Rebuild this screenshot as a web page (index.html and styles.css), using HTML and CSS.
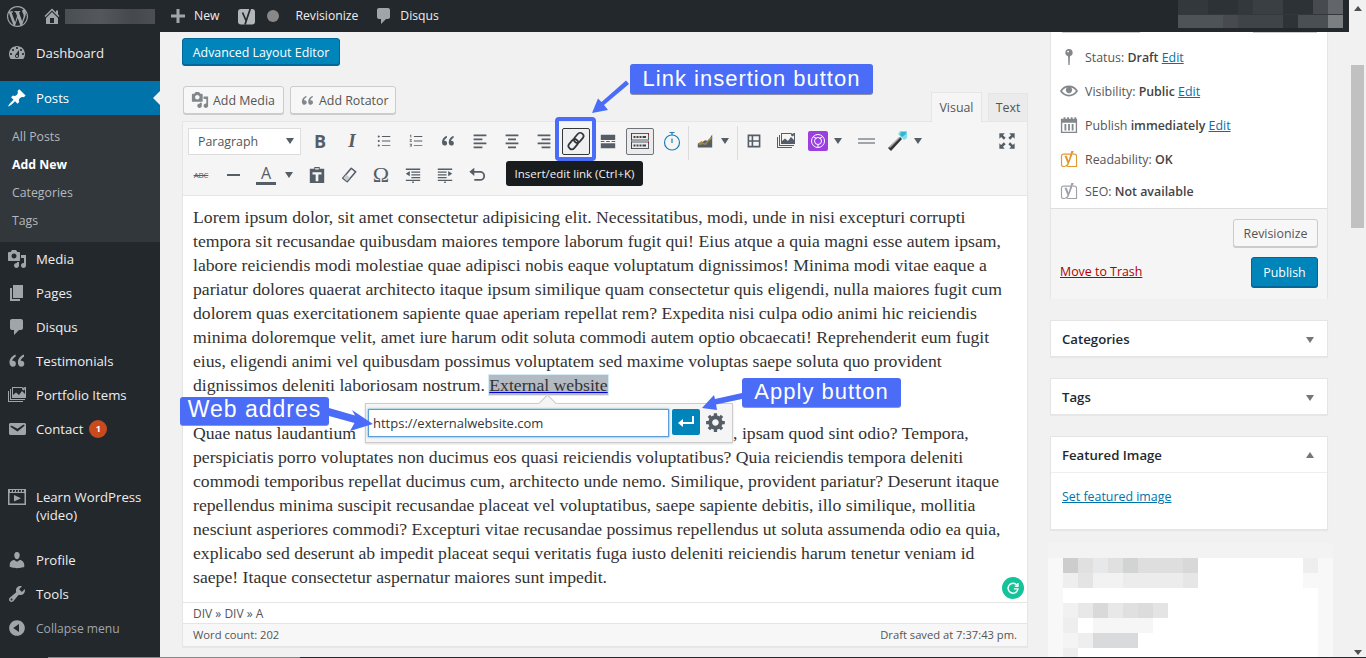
FILE: index.html
```html
<!DOCTYPE html>
<html lang="en">
<head>
<meta charset="utf-8">
<title>Add New Post</title>
<link rel="stylesheet" href="styles.css">
</head>
<body>
<svg class="sprite" xmlns="http://www.w3.org/2000/svg">
  <symbol id="i-wp" viewBox="0 0 20 20"><path d="M20 10c0-5.51-4.49-10-10-10C4.48 0 0 4.49 0 10c0 5.52 4.48 10 10 10 5.51 0 10-4.48 10-10zM7.78 15.37L4.37 6.22c.55-.02 1.17-.08 1.17-.08.5-.06.44-1.13-.06-1.11 0 0-1.45.11-2.37.11-.18 0-.37 0-.58-.01C4.12 2.69 6.87 1.11 10 1.11c2.33 0 4.45.87 6.05 2.34-.68-.11-1.65.39-1.65 1.58 0 .74.45 1.36.9 2.1.35.61.55 1.36.55 2.46 0 1.49-1.4 5-1.4 5l-3.03-8.37c.54-.02.82-.17.82-.17.5-.05.44-1.25-.06-1.22 0 0-1.44.12-2.38.12-.87 0-2.33-.12-2.33-.12-.5-.03-.56 1.2-.06 1.22l.92.08 1.26 3.41zM17.41 10c.24-.64.74-1.87.43-4.25.7 1.29 1.05 2.71 1.05 4.25 0 3.29-1.73 6.24-4.4 7.78.97-2.59 1.94-5.2 2.92-7.78zM6.1 18.09C3.12 16.65 1.11 13.53 1.11 10c0-1.3.23-2.48.72-3.59C3.25 10.3 4.67 14.2 6.1 18.09zm4.03-6.63l2.58 6.98c-.86.29-1.76.45-2.71.45-.79 0-1.57-.11-2.29-.33.81-2.38 1.62-4.74 2.42-7.1z"/></symbol>
  <symbol id="i-home" viewBox="0 0 20 20"><path d="M16 8.5l1.53 1.53-1.06 1.06L10 4.62l-6.47 6.47-1.06-1.06L10 2.5l4 4v-2h2v4zm-6-2.46l6 5.99V18H4v-5.97zM12 17v-5H8v5h4z"/></symbol>
  <symbol id="i-plus" viewBox="0 0 20 20"><path d="M17 8.500v3h-5.500V17h-3v-5.500H3v-3h5.500V3h3v5.500z"/></symbol>
  <symbol id="i-comment" viewBox="0 0 20 20"><path d="M5 2h9c1.100 0 2 .9 2 2v7c0 1.100-.9 2-2 2h-2l-5 5v-5H5c-1.100 0-2-.9-2-2V4c0-1.100.9-2 2-2z"/></symbol>
  <symbol id="i-dash" viewBox="0 0 20 20"><path d="M3.760 16h12.480c1.100-1.370 1.760-3.110 1.760-5 0-4.420-3.580-8-8-8s-8 3.580-8 8c0 1.890.66 3.630 1.760 5zM10 4c.55 0 1 .45 1 1s-.45 1-1 1-1-.45-1-1 .45-1 1-1zM6 6c.55 0 1 .45 1 1s-.45 1-1 1-1-.45-1-1 .45-1 1-1zm8 0c.55 0 1 .45 1 1s-.45 1-1 1-1-.45-1-1 .45-1 1-1zm-5.370 5.550L12 7v6c0 1.100-.9 2-2 2s-2-.9-2-2c0-.57.24-1.080.63-1.450zM4 10c.55 0 1 .45 1 1s-.45 1-1 1-1-.45-1-1 .45-1 1-1zm12 0c.55 0 1 .45 1 1s-.45 1-1 1-1-.45-1-1 .45-1 1-1zm-5 3c0-.55-.45-1-1-1s-1 .45-1 1 .45 1 1 1 1-.45 1-1z"/></symbol>
  <symbol id="i-pin" viewBox="0 0 20 20"><path d="M10.440 3.020l1.820-1.820 6.360 6.350-1.830 1.820c-1.050-.68-2.480-.57-3.410.36l-.75.75c-.92.93-1.040 2.350-.35 3.410l-1.830 1.820-2.410-2.410-2.800 2.790c-.42.42-3.380 2.710-3.800 2.290s1.860-3.390 2.280-3.810l2.790-2.790L4.100 9.360l1.830-1.820c1.050.69 2.480.57 3.400-.36l.75-.75c.93-.92 1.050-2.350.36-3.410z"/></symbol>
  <symbol id="i-media" viewBox="0 0 20 20"><path d="M13 11V4c0-.55-.45-1-1-1h-1.670L9 1H5L3.670 3H2c-.55 0-1 .45-1 1v7c0 .55.45 1 1 1h10c.55 0 1-.45 1-1zM7 4.500c1.380 0 2.500 1.120 2.500 2.500S8.380 9.500 7 9.500 4.500 8.380 4.500 7 5.620 4.500 7 4.500zM14 6h5v10.500c0 1.380-1.120 2.500-2.500 2.500S14 17.880 14 16.500s1.120-2.500 2.500-2.500c.17 0 .34.02.5.05V9h-3V6zm-4 8.050V13h2v3.500c0 1.380-1.120 2.500-2.500 2.500S7 17.880 7 16.500 8.120 14 9.500 14c.17 0 .34.02.5.05z"/></symbol>
  <symbol id="i-page" viewBox="0 0 20 20"><path d="M6 15V2h10v13H6zm-1 1h8v2H3V5h2v11z"/></symbol>
  <symbol id="i-quote" viewBox="0 0 20 20"><path d="M8.600 3.500C5 5 2.500 7.600 2.500 11.500c0 2.500 1.400 4.200 3.400 4.200 1.700 0 3-1.300 3-3s-1.200-2.900-2.800-2.900c-.4 0-.7 0-.9.1.3-1.700 1.800-3.200 3.400-4.100zM17 3.500c-3.600 1.500-6.100 4.100-6.100 8 0 2.500 1.400 4.200 3.400 4.200 1.700 0 3-1.300 3-3s-1.200-2.900-2.800-2.900c-.4 0-.7 0-.9.1.3-1.700 1.800-3.200 3.400-4.100z"/></symbol>
  <symbol id="i-gallery" viewBox="0 0 20 20"><path d="M5 2h14v11H5zm1 1v7l3-2.500 3 2.500 3-4 3 3V3zm9 .800a1.500 1.500 0 1 1 0 .01z" fill-rule="evenodd"/><path d="M3 4h1v10h14v1H3zM1 6h1v10h14v1H1z"/></symbol>
  <symbol id="i-mail" viewBox="0 0 20 20"><path d="M3.870 4h13.250C18.370 4 19 4.590 19 5.790v8.420c0 1.190-.63 1.790-1.880 1.790H3.870c-1.250 0-1.880-.6-1.880-1.790V5.790c0-1.200.63-1.790 1.880-1.790zm6.620 8.600l6.740-5.530c.24-.2.43-.66.13-1.070-.29-.41-.82-.42-1.170-.17l-5.700 3.860L4.800 6.830c-.35-.25-.88-.24-1.170.17-.3.41-.11.87.13 1.070z"/></symbol>
  <symbol id="i-video" viewBox="0 0 20 20"><path d="M1 1h18v16H1zm1.500 4v10.500h15V5zM3 2v2h1.500l.6-2zm3 0v2h1.500l.6-2zm3 0v2h1.500l.6-2zm3 0v2h1.500l.6-2zm3 0v2h1.500l.6-2zM7 7l7 3.200L7 13.500z" fill-rule="evenodd"/></symbol>
  <symbol id="i-user" viewBox="0 0 20 20"><path d="M10 9.250c-2.270 0-2.730-3.440-2.730-3.440C7 4.020 7.820 2 9.970 2c2.160 0 2.980 2.020 2.710 3.810 0 0-.41 3.440-2.680 3.440zm0 2.570L12.720 10c2.390 0 4.520 2.330 4.520 4.530v2.490s-3.650 1.130-7.240 1.130c-3.650 0-7.240-1.130-7.240-1.130v-2.490c0-2.250 1.940-4.480 4.470-4.480z"/></symbol>
  <symbol id="i-tools" viewBox="0 0 20 20"><path d="M16.680 9.770c-1.340 1.340-3.300 1.670-4.950.99l-5.410 6.520c-.99.99-2.590.99-3.580 0s-.99-2.590 0-3.570l6.520-5.420c-.68-1.650-.35-3.610.99-4.950 1.280-1.280 3.120-1.620 4.720-1.060l-2.890 2.890 2.820 2.820 2.860-2.870c.53 1.580.18 3.390-1.080 4.650zM3.810 16.210c.4.39 1.040.39 1.430 0 .4-.4.4-1.040 0-1.430-.39-.4-1.030-.4-1.430 0-.39.39-.39 1.030 0 1.430z"/></symbol>
  <symbol id="i-collapse" viewBox="0 0 20 20"><path d="M10 2.160c4.330 0 7.840 3.510 7.840 7.840s-3.510 7.840-7.840 7.840S2.160 14.330 2.160 10 5.710 2.160 10 2.160zm2 11.720V6.120L6.180 9.970z"/></symbol>
  <symbol id="i-cog" viewBox="0 0 20 20"><path d="M18 12h-2.180c-.17.7-.44 1.350-.81 1.930l1.540 1.540-2.100 2.100-1.540-1.540c-.58.36-1.230.63-1.910.79V19H8v-2.180c-.68-.16-1.330-.43-1.910-.79l-1.540 1.540-2.120-2.120 1.540-1.540c-.36-.58-.63-1.230-.79-1.910H1V9.030h2.170c.16-.7.44-1.350.8-1.940L2.430 5.550l2.100-2.100 1.540 1.540c.58-.37 1.240-.64 1.930-.81V2h3v2.180c.68.16 1.330.43 1.910.79l1.540-1.540 2.120 2.120-1.540 1.540c.36.59.64 1.240.8 1.940H18V12zm-8.500 1.500c1.660 0 3-1.340 3-3s-1.340-3-3-3-3 1.340-3 3 1.340 3 3 3z"/></symbol>
  <symbol id="i-eye" viewBox="0 0 20 20"><path d="M19.700 9.400C17.700 6 14 3.900 10 3.900S2.300 6 .3 9.400L0 10l.3.6c2 3.400 5.700 5.500 9.700 5.500s7.700-2.100 9.700-5.500l.3-.6-.3-.6zM10 14.100c-3.100 0-6-1.600-7.700-4.100C3.600 8 5.700 6.600 8 6.100c-.9.6-1.500 1.700-1.500 2.900 0 1.900 1.600 3.500 3.500 3.500s3.500-1.600 3.500-3.500c0-1.200-.6-2.300-1.500-2.900 2.300.5 4.400 1.900 5.700 3.900-1.700 2.500-4.600 4.100-7.700 4.100z"/></symbol>
  <symbol id="i-key" viewBox="0 0 20 20"><path d="M10 1a4 4 0 0 1 1.300 7.800L11 10l-.3 9h-1.400L9 10l-.3-1.200A4 4 0 0 1 10 1zM9 3a1 1 0 1 0 0 2 1 1 0 0 0 0-2z" fill-rule="evenodd"/></symbol>
  <symbol id="i-cal" viewBox="0 0 20 20"><path d="M2 3h2V1.500h2V3h2V1.500h2V3h2V1.500h2V3h2V1.500h2V3h1v16H1V3zm.5 4.500V17.500h15V7.500zM5 9h2v7H5zm4 0h2v7H9zm4 0h2v7h-2z" fill-rule="evenodd"/></symbol>
  <symbol id="i-y" viewBox="0 0 20 20"><path d="M4 4h8v1.300H4C3 5.300 2.300 6 2.300 7v9c0 1 .7 1.700 1.700 1.700h2V19H4c-1.800 0-3-1.200-3-3V7c0-1.800 1.200-3 3-3zm10.500 0H16c1.800 0 3 1.200 3 3v12H8v-1.300h9.700V7c0-1-.7-1.700-1.700-1.700h-2z" fill-rule="evenodd"/><path d="M12.500 1h2.800L10 15c-.8 2.200-2 3.300-4 3.700v-1.800c1.200-.3 1.900-1 2.300-2.200L5 6.500h2.500l2 5.200z"/></symbol>
  <symbol id="i-bullets" viewBox="0 0 20 20"><path d="M1 3.500a1.500 1.500 0 1 0 3 0 1.500 1.500 0 1 0-3 0zM1 10a1.500 1.500 0 1 0 3 0 1.500 1.500 0 1 0-3 0zm0 6.500a1.500 1.500 0 1 0 3 0 1.500 1.500 0 1 0-3 0zM7 3h12v1.200H7zm0 6.400h12v1.200H7zm0 6.500h12v1.200H7z"/></symbol>
  <symbol id="i-numbers" viewBox="0 0 20 20"><path d="M2 1h1.200v4H2V2H1zM1 7.500h3v1l-1.700 1.500H4v1H1v-1l1.800-1.500H1zM1 14h3v4H1v-1h2v-.5H1.500v-1H3V15H1zM7 3h12v1.200H7zm0 6.400h12v1.200H7zm0 6.500h12v1.200H7z"/></symbol>
  <symbol id="i-alignl" viewBox="0 0 20 20"><path d="M2 2h16v2H2zm0 5h11v2H2zm0 5h16v2H2zm0 5h11v2H2z"/></symbol>
  <symbol id="i-alignc" viewBox="0 0 20 20"><path d="M2 2h16v2H2zm3 5h10v2H5zm-3 5h16v2H2zm3 5h10v2H5z"/></symbol>
  <symbol id="i-alignr" viewBox="0 0 20 20"><path d="M2 2h16v2H2zm5 5h11v2H7zm-5 5h16v2H2zm5 5h11v2H7z"/></symbol>
  <symbol id="i-more" viewBox="0 0 20 20"><path d="M2 3h16v6H2zM2 12.500h16v5.500H2zM2 10h4v1H2zm6 0h4v1H8zm6 0h4v1h-4z"/></symbol>
  <symbol id="i-fs" viewBox="0 0 20 20"><path d="M1.500 1.500h6L5.500 3.500l3 3-2 2-3-3-2 2zm17 0v6l-2-2-3 3-2-2 3-3-2-2zm-17 17v-6l2 2 3-3 2 2-3 3 2 2zm17 0h-6l2-2-3-3 2-2 3 3 2-2z"/></symbol>
  <symbol id="i-paste" viewBox="0 0 20 20"><path d="M7 1h6v2h5v16H2V3h5zm1 1.500V4h4V2.500zM5 7v2.500h3.500V17h3V9.500H15V7z" fill-rule="evenodd"/></symbol>
  <symbol id="i-outdent" viewBox="0 0 20 20"><path d="M1 2h18v1.600H1zm7 3.500h11v1.600H8zm0 3.500h11v1.600H8zm0 3.500h11v1.600H8zM1 16h18v1.600H1zM9 18h2v2H9zM6 5v6.500L1 8.300z"/></symbol>
  <symbol id="i-indent" viewBox="0 0 20 20"><path d="M1 2h18v1.600H1zm0 3.500h11v1.600H1zm0 3.500h11v1.600H1zm0 3.500h11v1.600H1zM1 16h18v1.600H1zM9 18h2v2H9zM14 5v6.500l5-3.200z"/></symbol>
  <symbol id="i-undo" viewBox="0 0 20 20"><path d="M7 2v3.500h6.500a5.500 5.500 0 0 1 0 11H7v-2h6.500a3.500 3.500 0 0 0 0-7H7V11L1.500 6.500z"/></symbol>
  <symbol id="i-film" viewBox="0 0 20 20"><path d="M2 2h16v16H2zm2 2v5h3V4zm5 0v5h7V4zM4 11v5h3v-5zm5 0v5h7v-5z" fill-rule="evenodd"/></symbol>
</svg>

<div class="stage">
  <div class="leftpane">
    <header class="adminbar">
      <svg class="bar-wp"><use href="#i-wp"/></svg>
      <svg class="bar-home"><use href="#i-home"/></svg>
      <div class="bar-blur"></div>
      <svg class="bar-plus"><use href="#i-plus"/></svg>
      <span class="bar-new">New</span>
      <svg class="bar-yoast" viewBox="0 0 18 20"><rect x="0" y="3" width="17" height="15.500" rx="3" fill="#b4b7ba"/><path d="M4.500 6.500l3.500 8M13 .5L7 18.500" fill="none" stroke="#23282d" stroke-width="1.700"/></svg>
      <span class="bar-dot"></span>
      <span class="bar-rev">Revisionize</span>
      <svg class="bar-bubble"><use href="#i-comment"/></svg>
      <span class="bar-disqus">Disqus</span>
      <svg class="bar-mosaic" viewBox="0 0 165 28">
        <rect width="165" height="28" fill="#33383d"/>
        <rect x="30" width="30" height="14" fill="#2d3237"/><rect x="75" width="30" height="14" fill="#3a3f44"/><rect x="105" width="30" height="14" fill="#2d3237"/><rect x="135" width="15" height="14" fill="#474b4f"/><rect x="150" width="15" height="14" fill="#62656a"/>
        <rect y="15" width="45" height="13" fill="#4e5358"/><rect x="45" y="15" width="15" height="13" fill="#474b50"/><rect x="60" y="15" width="45" height="13" fill="#3f4449"/><rect x="105" y="15" width="15" height="13" fill="#2e3338"/><rect x="120" y="15" width="30" height="13" fill="#4a4f53"/><rect x="150" y="15" width="15" height="13" fill="#7c7f82"/>
      </svg>
    </header>
    <div class="columns">
      <nav class="sidebar">
        <a class="mi mi-dash"><svg><use href="#i-dash"/></svg><span>Dashboard</span></a>
        <a class="mi current"><svg><use href="#i-pin"/></svg><span>Posts</span></a>
        <div class="submenu">
          <a>All Posts</a>
          <a class="strong">Add New</a>
          <a>Categories</a>
          <a>Tags</a>
        </div>
        <a class="mi"><svg><use href="#i-media"/></svg><span>Media</span></a>
        <a class="mi"><svg><use href="#i-page"/></svg><span>Pages</span></a>
        <a class="mi"><svg><use href="#i-comment"/></svg><span>Disqus</span></a>
        <a class="mi"><svg><use href="#i-quote"/></svg><span>Testimonials</span></a>
        <a class="mi"><svg><use href="#i-gallery"/></svg><span>Portfolio Items</span></a>
        <a class="mi"><svg><use href="#i-mail"/></svg><span>Contact</span><b class="badge">1</b></a>
        <a class="mi mi-learn"><svg><use href="#i-video"/></svg><span>Learn WordPress<br>(video)</span></a>
        <a class="mi"><svg><use href="#i-user"/></svg><span>Profile</span></a>
        <a class="mi"><svg><use href="#i-tools"/></svg><span>Tools</span></a>
        <a class="mi mi-collapse"><svg><use href="#i-collapse"/></svg><span>Collapse menu</span></a>
      </nav>
      <main class="main">
        <section class="editorcol">
          <button class="btn-primary ale">Advanced Layout Editor</button>
          <div class="mediarow">
            <button class="btn btn-media"><svg class="btn-ic"><use href="#i-media"/></svg>Add Media</button>
            <button class="btn btn-rot"><svg class="btn-ic q"><use href="#i-quote"/></svg>Add Rotator</button>
            <div class="tabs">
              <span class="tab active">Visual</span>
              <span class="tab">Text</span>
            </div>
          </div>
          <div class="editor">
            <div class="toolbar">
              <div class="tbrow">
                <div class="select">Paragraph<i class="caret"></i></div>
                <span class="tb tb-b">B</span>
                <span class="tb tb-i">I</span>
                <span class="tb"><svg class="s14"><use href="#i-bullets"/></svg></span>
                <span class="tb"><svg class="s14"><use href="#i-numbers"/></svg></span>
                <span class="tb"><svg class="s16"><use href="#i-quote"/></svg></span>
                <span class="tb"><svg class="s16"><use href="#i-alignl"/></svg></span>
                <span class="tb"><svg class="s16"><use href="#i-alignc"/></svg></span>
                <span class="tb"><svg class="s16"><use href="#i-alignr"/></svg></span>
                <span class="tb tb-link">
                  <svg class="s20" viewBox="0 0 20 20"><g fill="none" stroke="#32373c" stroke-width="1.800"><rect x="9.500" y="1.300" width="6.500" height="11" rx="3.200" transform="rotate(40 12.700 6.800)"/><rect x="4" y="7.700" width="6.500" height="11" rx="3.200" transform="rotate(40 7.200 13.200)"/></g></svg>
                </span>
                <span class="tb"><svg class="s18"><use href="#i-more"/></svg></span>
                <span class="tb tb-kbd">
                  <svg class="s20" viewBox="0 0 20 20"><g fill="none" stroke="#555d66"><rect x="1.500" y="2.500" width="17" height="6.500"/><rect x="1.500" y="11" width="17" height="6.500"/></g><path fill="#8b2231" d="M1 2h1v7.500H1zm0 8.500h1V18H1zM18 2h1v2h-1zm0 8.500h1v2h-1z"/><path fill="#444" d="M3.500 5h2v2h-2zm3 0h2v2h-2zm3 0h2v2h-2zm3 0h3.500v2H12.500zM3.500 13.500h2v2h-2zm3 0h2v2h-2zm3 0h2v2h-2zm3 0h3.500v2H12.500z"/></svg>
                </span>
                <span class="tb">
                  <svg class="s20" viewBox="0 0 20 20"><g fill="none" stroke="#1d7fb5" stroke-width="1.200"><circle cx="10" cy="11.500" r="7.500"/><path d="M10 12V7.500M7.500 1.500h5M10 1.500V4"/></g></svg>
                </span>
                <span class="sep"></span>
                <span class="tb">
                  <svg class="s16" viewBox="0 0 20 20"><path fill="#555d66" d="M1 18v-5l5-1 4-3 4 1 5-8v16z"/><path fill="#a9873a" d="M1 13l5-3 3 3 3-2 2-3 5-3v2l-5 4-3 4-3-1-5 1z"/></svg>
                </span>
                <i class="caret tbcaret"></i>
                <span class="sep"></span>
                <span class="tb"><svg class="s16"><use href="#i-film"/></svg></span>
                <span class="tb"><svg class="s20"><use href="#i-gallery"/></svg></span>
                <span class="tb">
                  <svg class="s20" viewBox="0 0 20 20"><rect width="20" height="20" rx="2" fill="#9b3fe0"/><g fill="none" stroke="#fff" stroke-width="1"><circle cx="10" cy="10" r="6.500"/><circle cx="10" cy="10" r="3.500"/><path d="M5 5.500l3.500 2M15 5.500l-3.500 2M10 16v-2.500"/></g></svg>
                </span>
                <i class="caret tbcaret"></i>
                <span class="tb tb-hr2"><i></i><i></i></span>
                <span class="tb">
                  <svg class="s22" viewBox="0 0 22 22"><path fill="#7fe0ea" d="M13 1h7v7l-3 2-6-6z"/><path fill="#34b3d6" d="M14 2h5v2l-4 3-2-2z"/><path fill="#333" d="M13 7l2 2L4 21l-3-3z"/><path fill="#aaa" d="M2 17l10-10 1 1L3 18z"/></svg>
                </span>
                <i class="caret tbcaret"></i>
                <span class="tb tb-fs"><svg class="s18"><use href="#i-fs"/></svg></span>
              </div>
              <div class="tbrow tbrow2">
                <span class="tb tb-abc">ABC</span>
                <span class="tb tb-hr"></span>
                <span class="tb tb-color">A</span>
                <i class="caret tbcaret caret-color"></i>
                <span class="tb"><svg class="s18"><use href="#i-paste"/></svg></span>
                <span class="tb">
                  <svg class="s18" viewBox="0 0 20 20"><path fill="none" stroke="#555d66" stroke-width="1.700" stroke-linejoin="round" d="M12.500 2.500L17.500 6.500 8 17.500 3 13.500z"/><path fill="#c8ccd0" d="M3.700 13.400L7.800 16.600 11 13 7 9.500z"/></svg>
                </span>
                <span class="tb tb-omega">Ω</span>
                <span class="tb"><svg class="s16"><use href="#i-outdent"/></svg></span>
                <span class="tb"><svg class="s16"><use href="#i-indent"/></svg></span>
                <span class="tb"><svg class="s18"><use href="#i-undo"/></svg></span>
              </div>
            </div>
            <div class="content">
              <p>Lorem ipsum dolor, sit amet consectetur adipisicing elit. Necessitatibus, modi, unde in nisi excepturi corrupti<br>
              tempora sit recusandae quibusdam maiores tempore laborum fugit qui! Eius atque a quia magni esse autem ipsam,<br>
              labore reiciendis modi molestiae quae adipisci nobis eaque voluptatum dignissimos! Minima modi vitae eaque a<br>
              pariatur dolores quaerat architecto itaque ipsum similique quam consectetur quis eligendi, nulla maiores fugit cum<br>
              dolorem quas exercitationem sapiente quae aperiam repellat rem? Expedita nisi culpa odio animi hic reiciendis<br>
              minima doloremque velit, amet iure harum odit soluta commodi autem optio obcaecati! Reprehenderit eum fugit<br>
              eius, eligendi animi vel quibusdam possimus voluptatem sed maxime voluptas saepe soluta quo provident<br>
              dignissimos deleniti laboriosam nostrum. <a class="sel">External website</a></p>
              <p>Quae natus laudantium<span class="hiddengap"></span>, ipsam quod sint odio? Tempora,<br>
              perspiciatis porro voluptates non ducimus eos quasi reiciendis voluptatibus? Quia reiciendis tempora deleniti<br>
              commodi temporibus repellat ducimus cum, architecto unde nemo. Similique, provident pariatur? Deserunt itaque<br>
              repellendus minima suscipit recusandae placeat vel voluptatibus, saepe sapiente debitis, illo similique, mollitia<br>
              nesciunt asperiores commodi? Excepturi vitae recusandae possimus repellendus ut soluta assumenda odio ea quia,<br>
              explicabo sed deserunt ab impedit placeat sequi veritatis fuga iusto deleniti reiciendis harum tenetur veniam id<br>
              saepe! Itaque consectetur aspernatur maiores sunt impedit.</p>
            </div>
            <div class="path">DIV » DIV » A</div>
            <div class="status"><span>Word count: 202</span><span>Draft saved at 7:37:43 pm.</span></div>
          </div>
        </section>
        <aside class="side">
          <div class="box publish">
            <div class="ghosts"><i></i><i></i></div>
            <div class="pubrow"><svg class="ic-key"><use href="#i-key"/></svg><span>Status: <b>Draft</b> <a>Edit</a></span></div>
            <div class="pubrow"><svg class="ic-eye"><use href="#i-eye"/></svg><span>Visibility: <b>Public</b> <a>Edit</a></span></div>
            <div class="pubrow"><svg class="ic-cal"><use href="#i-cal"/></svg><span>Publish <b>immediately</b> <a>Edit</a></span></div>
            <div class="pubrow"><svg class="ic-y orange"><use href="#i-y"/></svg><span>Readability: <b>OK</b></span></div>
            <div class="pubrow last"><svg class="ic-y grey"><use href="#i-y"/></svg><span>SEO: <b>Not available</b></span></div>
            <div class="pubfoot">
              <div class="revrow"><button class="btn revbtn">Revisionize</button></div>
              <div class="actrow"><a class="trash">Move to Trash</a><button class="btn-primary pubbtn">Publish</button></div>
            </div>
          </div>
          <div class="box mbox"><h3>Categories</h3><i class="mcaret"></i></div>
          <div class="box mbox"><h3>Tags</h3><i class="mcaret"></i></div>
          <div class="box feat">
            <div class="mbox"><h3>Featured Image</h3><i class="mcaret up"></i></div>
            <div class="featbody"><a>Set featured image</a></div>
          </div>
          <svg class="blurblock" viewBox="0 0 285 115">
            <rect width="285" height="115" fill="#f8f8f8"/><rect width="285" height="15" fill="#f3f3f3"/>
            <rect x="15" y="15" width="240" height="30" fill="#fff"/><rect x="15" y="45" width="255" height="70" fill="#fff"/>
            <rect x="15" y="15" width="15" height="15" fill="#cdcdcd"/><rect x="30" y="15" width="15" height="15" fill="#e0e0e0"/><rect x="45" y="15" width="15" height="15" fill="#e6e8ea"/><rect x="60" y="15" width="15" height="15" fill="#e0e0e0"/><rect x="75" y="15" width="15" height="15" fill="#d2d3d3"/><rect x="90" y="15" width="45" height="15" fill="#dedede"/><rect x="135" y="15" width="15" height="15" fill="#d8d8d8"/><rect x="255" y="15" width="15" height="15" fill="#eee"/>
            <rect x="15" y="30" width="15" height="15" fill="#eee"/><rect x="30" y="30" width="15" height="15" fill="#e4e4e4"/><rect x="45" y="30" width="30" height="15" fill="#f2f2f2"/><rect x="75" y="30" width="60" height="15" fill="#ececec"/><rect x="135" y="30" width="15" height="15" fill="#e6e6e6"/>
            <rect x="15" y="60" width="15" height="15" fill="#f1f1f1"/><rect x="30" y="60" width="15" height="15" fill="#e8e8e8"/><rect x="45" y="60" width="15" height="15" fill="#d9d9d9"/><rect x="60" y="60" width="15" height="15" fill="#e8e8e8"/><rect x="75" y="60" width="15" height="15" fill="#e0e0e0"/><rect x="90" y="60" width="15" height="15" fill="#dcdcdc"/><rect x="105" y="60" width="15" height="15" fill="#e4e4e4"/>
            <rect x="15" y="75" width="15" height="15" fill="#eee"/><rect x="45" y="75" width="60" height="15" fill="#f6f6f6"/>
            <rect x="15" y="90" width="15" height="15" fill="#f4f4f4"/><rect x="30" y="90" width="15" height="15" fill="#eee"/><rect x="45" y="90" width="45" height="15" fill="#d9dadb"/>
            <rect x="15" y="105" width="15" height="10" fill="#eee"/>
          </svg>
        </aside>
      </main>
    </div>
  </div>
  <div class="scrollbar">
    <i class="sb-up"></i>
    <div class="sb-thumb"></div>
    <i class="sb-down"></i>
  </div>

  <!-- Overlays -->
  <div class="tooltip">Insert/edit link (Ctrl+K)</div>
  <div class="linkbox">
    <div class="lb-input">https://externalwebsite.com</div>
    <span class="lb-apply"><svg viewBox="0 0 20 20"><path fill="#fff" d="M16 4h2v8H7v3L2 11l5-4v3h9z"/></svg></span>
    <svg class="lb-cog"><use href="#i-cog"/></svg>
  </div>
  <div class="grammarly"><svg viewBox="0 0 20 20"><path d="M14.500 7A5.500 5.500 0 1 0 15.500 11H11" fill="none" stroke="#fff" stroke-width="1.600"/><path d="M15.500 4.500V8H12" fill="none" stroke="#fff" stroke-width="1.600"/></svg></div>

  <div class="hl-link"></div>
  <div class="note note-link">Link insertion button</div>
  <div class="note note-web">Web addres</div>
  <div class="note note-apply">Apply button</div>
  <svg class="arrows" viewBox="0 0 1366 658">
    <g fill="#4a6cf7">
      <path d="M626 80.500L629 84 604 105 608 110 592 113 598 98.500 601.500 102z"/>
      <path d="M329 408L355 415.500 352 410 373 424 350 431 354.500 423 329 416z"/>
      <path d="M742 393L742 399 716 404.500 717 410 702 408 714 395 715 399z"/>
    </g>
  </svg>
  <div class="bottomline"></div>
</div>
</body>
</html>
```

FILE: styles.css
```css
* { box-sizing: border-box; }
html, body { margin: 0; padding: 0; height: 658px; overflow: hidden; }
body { font: 12.400px/1.4 "Open Sans", "Noto Sans", sans-serif; color: #444; background: #f1f1f1; }
.sprite { display: none; }
svg { display: block; flex: none; }
a { text-decoration: none; }
button { font: inherit; margin: 0; cursor: default; }

.stage { position: relative; display: flex; width: 1366px; height: 658px; overflow: hidden; }
.leftpane { width: 1349px; display: flex; flex-direction: column; }

/* admin bar */
.adminbar { height: 32px; background: #23282d; display: flex; align-items: center; color: #eee; font-size: 12.200px; padding-left: 7px; flex: none; }
.adminbar svg { fill: #a0a5aa; }
.bar-wp { width: 21px; height: 21px; }
.bar-home { width: 20px; height: 20px; margin-left: 14px; }
.bar-blur { width: 90px; height: 15px; margin-left: 3px; background: linear-gradient(90deg, #4a4f53, #54585c 40%, #45494e 75%, #4c5054); }
.bar-plus { width: 20px; height: 20px; margin-left: 13px; }
.bar-new { margin-left: 6px; }
.bar-yoast { width: 18px; height: 20px; margin-left: 19px; }
.bar-dot { width: 12px; height: 12px; border-radius: 50%; background: #888; margin-left: 11px; }
.bar-rev { margin-left: 16px; }
.adminbar .bar-bubble { width: 20px; height: 20px; margin-left: 16px; }
.bar-disqus { margin-left: 6px; }
.bar-mosaic { width: 165px; height: 28px; margin-left: auto; margin-right: 6px; align-self: flex-start; }

.columns { display: flex; flex: 1; min-height: 0; }

/* sidebar */
.sidebar { width: 160px; background: #23282d; padding-top: 4px; flex: none; color: #eee; font-size: 13.200px; }
.mi { display: flex; align-items: center; height: 34px; padding-left: 7px; color: #eee; }
.mi svg { width: 20px; height: 20px; fill: #a0a5aa; margin-right: 9px; }
.mi-dash { margin-bottom: 11px; }
.current { background: #0073aa; color: #fff; position: relative; }
.current svg { fill: #fff; }
.current::after { content: ""; position: absolute; right: 0; top: 10px; border: 7px solid transparent; border-right-color: #f1f1f1; border-left-width: 0; }
.submenu { background: #32373c; padding: 7px 0 0; height: 127px; }
.submenu a { display: block; height: 28px; line-height: 30px; padding-left: 12px; font-size: 12.300px; color: #b4b9be; }
.submenu .strong { color: #fff; font-weight: 700; }
.badge { display: inline-flex; width: 18px; height: 18px; border-radius: 50%; background: #ca4a1f; color: #fff; font-size: 9px; align-items: center; justify-content: center; margin-left: 6px; }
.mi-learn { height: 48px; margin-top: 36px; margin-bottom: 13px; align-items: flex-start; padding-top: 6px; line-height: 18px; }
.mi-collapse { font-size: 12.100px; color: #a0a5aa; }
.mi-collapse span { padding-top: 2px; }

/* main */
.main { flex: 1; display: flex; padding-left: 22px; min-width: 0; }
.editorcol { width: 846px; padding-top: 6px; flex: none; }
.btn-primary { background: #0085ba; border: 1px solid #006799; border-radius: 3px; color: #fff; box-shadow: 0 1px 0 #006799; }
.ale { display: block; width: 158px; height: 27px; padding: 2px 0 0; }
.mediarow { display: flex; height: 35px; margin-top: 21px; padding-left: 1px; }
.btn { height: 28px; background: #f7f7f7; border: 1px solid #ccc; border-radius: 3px; box-shadow: 0 1px 0 #ccc; color: #555; display: inline-flex; align-items: center; }
.btn-media { width: 101px; padding: 2px 0 0 7px; }
.btn-rot { width: 106px; padding: 2px 0 0 9px; margin-left: 6px; }
.btn-ic { width: 18px; height: 18px; fill: #82878c; margin-right: 4px; margin-top: -2px; }
.btn-ic.q { width: 15px; height: 15px; margin-right: 4px; }
.tabs { margin-left: auto; display: flex; align-self: flex-end; align-items: flex-end; height: 29px; }
.tab { width: 40px; height: 28px; background: #ebebeb; border: 1px solid #e5e5e5; border-bottom: 0; color: #555; display: flex; align-items: center; justify-content: center; margin-left: 6px; }
.tab.active { width: 51px; height: 30px; background: #f5f5f5; margin-bottom: -1px; position: relative; }

.editor { border: 1px solid #e5e5e5; background: #fff; box-shadow: 0 1px 1px rgba(0,0,0,.04); }
.toolbar { background: #f5f5f5; border-bottom: 1px solid #e5e5e5; height: 74px; padding: 6px 0 0 5px; }
.tbrow { display: flex; align-items: center; height: 26px; color: #555d66; }
.tbrow2 { margin-top: 8px; margin-left: -3px; }
.select { width: 113px; height: 27px; background: #fff; border: 1px solid #ddd; padding: 2px 5px 0 9px; display: flex; align-items: center; justify-content: space-between; color: #555; margin-right: 3px; }
.caret { display: block; flex: none; width: 0; height: 0; border: 4px solid transparent; border-top: 6px solid #555d66; border-bottom: 0; }
.select .caret { margin: -2px 1px 0 0; }
.tb { width: 32px; height: 26px; display: flex; align-items: center; justify-content: center; flex: none; }
.tb svg { fill: #555d66; }
.tbcaret { margin: 0 8px 0 0; }
.caret-color { margin-left: 3px; }
.s14 { width: 14px; height: 14px; }
.s16 { width: 16px; height: 16px; }
.s18 { width: 18px; height: 18px; }
.s20 { width: 20px; height: 20px; }
.s22 { width: 22px; height: 22px; }
.tb-b { font: 700 18px "Open Sans", sans-serif; }
.tb-i { font: italic 700 19px "Liberation Serif", serif; }
.tb-link { width: 28px; height: 27px; margin: 0 2px; border: 1px solid #32373c; border-radius: 2px; background: #f0f0f0; }
.tb-link svg { fill: none; }
.tb-kbd { width: 28px; height: 27px; margin: 0 2px; border: 1px solid #6f7479; border-radius: 2px; background: #ececec; }
.tb-kbd svg { fill: none; }
.sep { width: 1px; height: 34px; background: #dcdcdc; margin: 2px 0 -2px 0; flex: none; }
.tb-hr2 { flex-direction: column; gap: 2px; }
.tb-hr2 i { display: block; width: 17px; height: 2px; background: #a0a5aa; }
.tb-fs { margin-left: auto; margin-right: 4px; }
.tb-abc { font-size: 8px; text-decoration: line-through; letter-spacing: -.2px; }
.tb-hr::before { content: ""; width: 13px; height: 2px; background: #555d66; }
.tb-color { font-size: 16px; line-height: 15px; height: 18px; margin-left: 1px; flex-direction: column; }
.tb-color::after { content: ""; width: 20px; height: 3px; background: #555d66; margin-top: 1px; flex: none; }
.tb-omega { font: 22px "Liberation Serif", serif; }

.content { height: 406px; padding: 9px 10px 0; font: 17.700px/24px "Liberation Serif", serif; color: #333; white-space: nowrap; overflow: hidden; }
.content p { margin: 0 0 24px; }
.sel { color: #333; text-decoration: underline; text-decoration-color: #0000d0; background: #b4bac1; box-shadow: 0 0 0 1px #d3ecf6; }
.hiddengap { display: inline-block; width: 377px; }
.path { height: 21px; border-top: 1px solid #e5e5e5; padding-left: 10px; font-size: 12px; line-height: 21px; color: #555; }
.status { height: 23px; border-top: 1px solid #e5e5e5; background: #f7f7f7; display: flex; justify-content: space-between; padding: 0 10px; font-size: 11.200px; line-height: 22px; color: #555; }

/* side column */
.side { width: 278px; margin-left: 22px; flex: none; }
.box { background: #fff; border: 1px solid #e5e5e5; box-shadow: 0 1px 1px rgba(0,0,0,.04); }
.publish { border-top: 0; height: 266px; position: relative; margin-bottom: 22px; }
.ghosts { display: flex; justify-content: space-between; padding: 0 10px 0 11px; height: 8px; }
.ghosts i { display: block; width: 78px; height: 1px; background: #ccc; }
.ghosts i + i { width: 64px; }
.pubrow { height: 34px; display: flex; align-items: center; color: #555; }
.pubrow.last { height: 30px; }
.pubrow span { padding-top: 2px; }
.pubrow svg { width: 18px; height: 18px; margin-left: 9px; margin-right: 7px; fill: #82878c; }
.pubrow b { font-weight: 600; color: #444; }
.pubrow a { color: #0073aa; text-decoration: underline; }
.pubrow .orange { fill: #e09a2f; }
.pubrow .grey { fill: #9fa3a8; }
.pubfoot { height: 91px; background: #f5f5f5; border-top: 1px solid #ddd; margin-top: 2px; padding: 10px 9px 0; }
.revrow { display: flex; justify-content: flex-end; }
.revbtn { width: 85px; justify-content: center; padding: 2px 0 0; }
.actrow { display: flex; justify-content: space-between; align-items: center; margin-top: 10px; }
.trash { color: #a00; text-decoration: underline; }
.pubbtn { width: 67px; height: 30px; padding: 2px 0 0; }
.mbox { position: relative; height: 37px; padding: 0 12px 0 11px; display: flex; align-items: center; margin-bottom: 21px; }
.mbox h3 { margin: 0; padding-top: 2px; font-size: 13.200px; font-weight: 600; color: #23282d; }
.mcaret { margin-left: auto; margin-right: 1px; width: 0; height: 0; border: 4px solid transparent; border-top: 6px solid #72777c; border-bottom: 0; margin-top: 2px; }
.mcaret.up { border-top: 0; border-bottom: 6px solid #72777c; margin-top: 0; }
.feat { height: 94px; }
.feat .mbox { height: 36px; margin: 0; border-bottom: 1px solid #eee; }
.featbody { padding: 15px 11px 0; }
.featbody a { color: #0073aa; text-decoration: underline; }
.blurblock { width: 285px; height: 115px; margin: 13px 0 0 -2px; }

/* scrollbar */
.scrollbar { width: 17px; background: #f1f1f1; position: relative; padding: 65px 2px 0; }
.sb-thumb { height: 163px; background: #c1c1c1; }
.sb-up, .sb-down { position: absolute; left: 5px; width: 0; height: 0; border: 4px solid transparent; }
.sb-up { top: 6px; border-top: 0; border-bottom: 5px solid #505050; }
.sb-down { bottom: 3px; border-bottom: 0; border-top: 5px solid #505050; }

/* overlays */
.tooltip { position: absolute; left: 506px; top: 161px; width: 137px; height: 25px; background: #191c1e; color: #f1f1f1; border-radius: 3px; font-size: 11.500px; line-height: 25px; text-align: center; }
.tooltip::before { content: ""; position: absolute; left: 65px; top: -3px; border: 3px solid transparent; border-top: 0; border-bottom-color: #191c1e; }
.linkbox { position: absolute; left: 365px; top: 403px; width: 368px; height: 40px; background: #f5f5f5; border: 1px solid #ccc; box-shadow: 0 1px 2px rgba(0,0,0,.15); display: flex; align-items: flex-start; padding: 5px 0 0 2px; }
.linkbox::before { content: ""; position: absolute; left: 175px; top: -7px; width: 12px; height: 12px; background: #f5f5f5; border: 1px solid #ccc; border-width: 1px 0 0 1px; transform: rotate(45deg); }
.lb-input { width: 301px; height: 28px; background: #fff; border: 1px solid #5b9dd9; box-shadow: 0 0 2px rgba(30,140,190,.8); padding-left: 4px; font-size: 13px; line-height: 26px; color: #32373c; position: relative; }
.lb-apply { width: 28px; height: 26px; margin-left: 3px; background: #0085ba; border-radius: 2px; display: flex; align-items: center; justify-content: center; }
.lb-apply svg { width: 20px; height: 20px; }
.lb-cog { width: 22px; height: 22px; margin: 2px 0 0 5px; fill: #555d66; }
.grammarly { position: absolute; left: 1002px; top: 577px; width: 22px; height: 22px; border-radius: 50%; background: #15c39a; padding: 2px; }
.hl-link { position: absolute; left: 555px; top: 117px; width: 41px; height: 44px; border: 4px solid #4a6cf7; border-radius: 4px; }
.note { position: absolute; background: #4a6cf7; border-radius: 3px; color: #fff; font: 22px/1 "Liberation Sans", sans-serif; letter-spacing: 1px; display: flex; align-items: center; justify-content: center; white-space: nowrap; box-shadow: 0 1px 0 rgba(40,50,90,.5); }
.note-link { left: 630px; top: 64px; width: 243px; height: 30px; }
.note-web { left: 180px; top: 397px; width: 149px; height: 28px; padding-bottom: 3px; font-size: 23px; }
.note-apply { left: 742px; top: 378px; width: 159px; height: 29px; padding-bottom: 2px; }
.arrows { position: absolute; left: 0; top: 0; width: 1366px; height: 658px; pointer-events: none; }
.bottomline { position: absolute; left: 48px; right: 0; bottom: 0; height: 1px; background: linear-gradient(90deg, #888 0 252px, #23282d 252px); }
```
